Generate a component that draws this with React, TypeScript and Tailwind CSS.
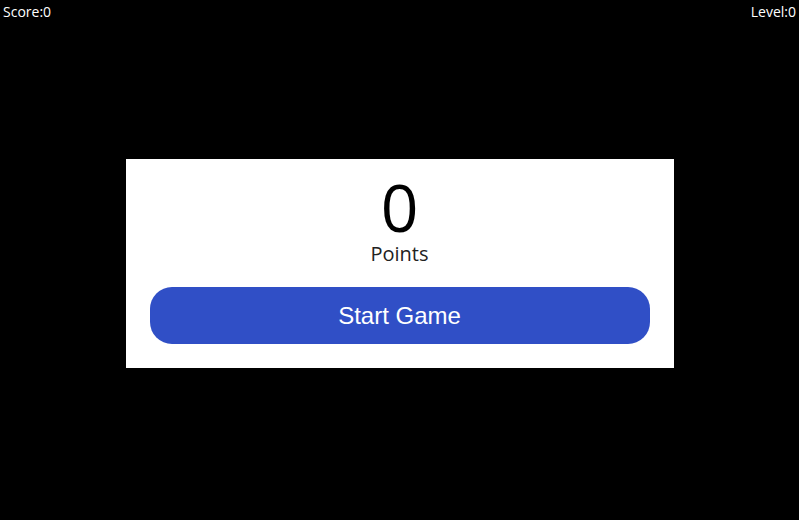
export default function App() {
  return (
    <div className="w-[799px] h-[520px] bg-black flex flex-col" style={{ fontFamily: '"Open Sans", "Liberation Sans", sans-serif' }}>
      <div className="flex justify-between px-[3px] text-white text-[14px] leading-[24px]">
        <span>Score:0</span>
        <span>Level:0</span>
      </div>
      <div className="flex justify-center mt-[135px]">
        <div className="w-[548px] h-[209px] bg-white px-[24px] pt-[12px] flex flex-col items-center">
          <div className="text-[66px] leading-[70px] text-black">0</div>
          <div className="text-[20px] leading-[26px] text-[#222]">Points</div>
          <button className="mt-[20px] w-[500px] h-[57px] rounded-[22px] bg-[#304FC6] text-white text-[24px]" style={{ fontFamily: '"Liberation Sans", Arial, sans-serif' }}>
            Start Game
          </button>
        </div>
      </div>
    </div>
  );
}
